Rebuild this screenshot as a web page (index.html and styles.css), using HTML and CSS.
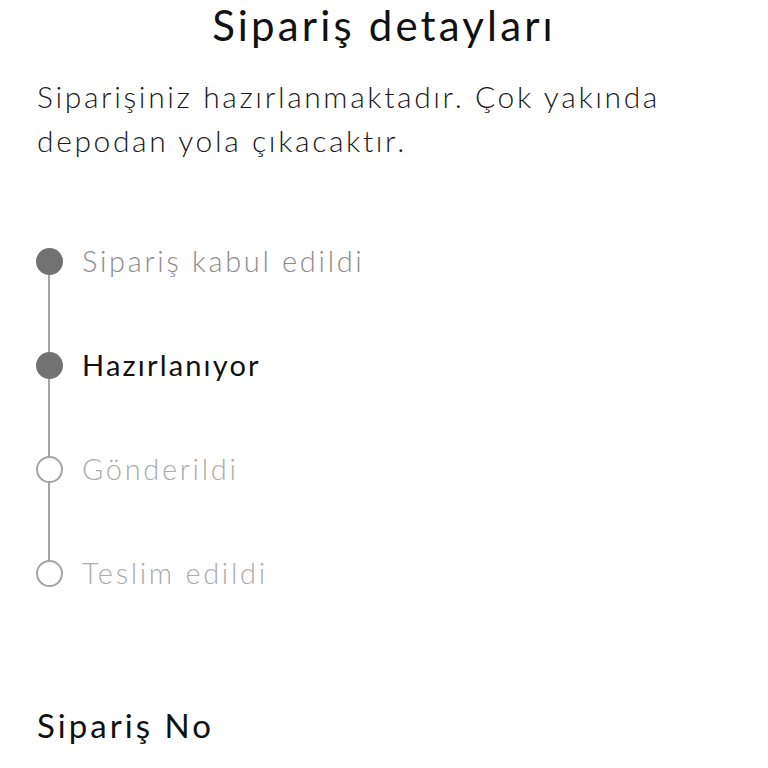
FILE: index.html
```html
<!DOCTYPE html>
<html lang="tr">
<head>
<meta charset="utf-8">
<link rel="stylesheet" href="styles.css">
</head>
<body>
<div class="page">
  <h1 class="title">Sipariş detayları</h1>
  <p class="intro">Siparişiniz hazırlanmaktadır. Çok yakında depodan yola çıkacaktır.</p>
  <ol class="steps">
    <li class="step done"><span class="dot"></span><span class="label">Sipariş kabul edildi</span></li>
    <li class="step current"><span class="dot"></span><span class="label">Hazırlanıyor</span></li>
    <li class="step todo"><span class="dot"></span><span class="label">Gönderildi</span></li>
    <li class="step todo last"><span class="dot"></span><span class="label">Teslim edildi</span></li>
  </ol>
  <h2 class="section">Sipariş No</h2>
</div>
</body>
</html>
```
FILE: styles.css
```css
* { box-sizing: border-box; }
html, body { margin: 0; padding: 0; background: #fff; }
body { font-family: "Lato", "Open Sans", sans-serif; color: #111; }
.page { padding: 0 37px; width: 768px; overflow: hidden; }
.title {
  margin: 0;
  font-weight: 400;
  font-size: 42px;
  line-height: 50px;
  letter-spacing: 0.075em;
  text-align: center;
}
.intro {
  margin: 24px 0 0;
  font-size: 30px;
  line-height: 44px;
  font-weight: 300;
  letter-spacing: 0.087em;
  color: #1a1a1a;
  max-width: 690px;
}
.steps { list-style: none; margin: 47px 0 0; padding: 0; }
.step {
  position: relative;
  display: flex;
  align-items: center;
  height: 104px;
  gap: 19px;
}
.step:not(.last)::after {
  content: "";
  position: absolute;
  left: 11px;
  top: 52px;
  width: 2px;
  height: 104px;
  background: #a3a3a3;
}
.dot {
  width: 27px; height: 27px; border-radius: 50%;
  flex: none;
  position: relative; z-index: 1;
  margin-left: -1px;
}
.done .dot, .current .dot { background: #727272; }
.todo .dot { background: #fff; border: 2px solid #a3a3a3; }
.label { font-size: 29px; line-height: 40px; font-weight: 300; letter-spacing: 0.092em; }
.done .label { color: #8c8c8c; }
.current .label { color: #111; font-weight: 400; letter-spacing: 0.075em; }
.todo .label { color: #ababab; }
.section {
  margin: 78px 0 0;
  font-size: 33px;
  line-height: 44px;
  font-weight: 400;
  letter-spacing: 0.092em;
}
```
